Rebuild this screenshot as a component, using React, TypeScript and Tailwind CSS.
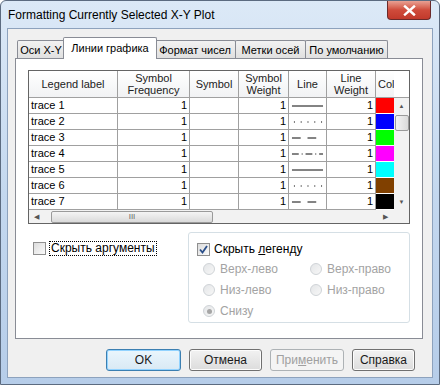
import React from "react";

const UI = { fontFamily: '"Liberation Sans", Arial, sans-serif' };

const ROWS = [
  { label: "trace 1", line: "solid", color: "#ff0000" },
  { label: "trace 2", line: "dot", color: "#0000ff" },
  { label: "trace 3", line: "dash", color: "#00ff00" },
  { label: "trace 4", line: "dashdot", color: "#ff00ff" },
  { label: "trace 5", line: "solid", color: "#00ffff" },
  { label: "trace 6", line: "dot", color: "#804000" },
  { label: "trace 7", line: "dash", color: "#000000" },
];

function LineStyle({ kind }: { kind: string }) {
  const dash: Record<string, string | undefined> = {
    solid: undefined,
    dot: "1 6",
    dash: "9 7",
    dashdot: "7 3 1 3",
  };
  return (
    <svg width="34" height="4" viewBox="0 0 34 4">
      <line
        x1={kind === "dot" ? "3" : "1"}
        y1="2"
        x2="33"
        y2="2"
        stroke={kind === "dot" ? "#444" : "#000"}
        strokeWidth={kind === "dot" ? "1.3" : "1"}
        strokeDasharray={dash[kind]}
      />
    </svg>
  );
}

function Checkbox({ checked }: { checked?: boolean }) {
  return (
    <span className="flex h-[13px] w-[13px] shrink-0 items-center justify-center border border-[#8f8f8f] bg-gradient-to-br from-[#dcdcdc] to-[#fbfbfb]">
      {checked && (
        <svg width="11" height="11" viewBox="0 0 11 11">
          <path d="M2 5.5 L4.5 8.5 L9 2" fill="none" stroke="#2b4f8a" strokeWidth="1.8" />
        </svg>
      )}
    </span>
  );
}

function Radio({ label, checked }: { label: string; checked?: boolean }) {
  return (
    <div className="flex h-[14px] items-center gap-[5px]">
      <span className="flex h-[12px] w-[12px] items-center justify-center rounded-full border border-[#cfd3d7] bg-gradient-to-br from-[#e4e6e8] to-[#f7f7f7]">
        {checked && <span className="h-[5px] w-[5px] rounded-full bg-[#a6a6a6]" />}
      </span>
      <span className="text-[12px] leading-[14px] text-[#a3a3a3]">{label}</span>
    </div>
  );
}

function Tab({ label, w, active }: { label: string; w: string; active?: boolean }) {
  if (active)
    return (
      <div className={`relative z-10 -mx-[2px] -mb-px flex h-[22px] items-start justify-center whitespace-nowrap rounded-t-[2px] border border-b-0 border-[#898c95] bg-white pt-[3px] text-[11px] leading-[14px] text-black ${w}`}>
        {label}
      </div>
    );
  return (
    <div className={`-ml-px flex h-[18px] items-center justify-center whitespace-nowrap rounded-t-[2px] border border-b-0 border-[#898c95] bg-gradient-to-b from-[#f2f2f2] to-[#e0e0e0] text-[11px] leading-[14px] text-black first:ml-0 ${w}`}>
      {label}
    </div>
  );
}

function Button({ label, w, focus, disabled }: { label: React.ReactNode; w: string; focus?: boolean; disabled?: boolean }) {
  return (
    <div
      className={`flex h-[22px] items-center justify-center rounded-[3px] border text-[12px] ${w} ${
        focus
          ? "border-[#3c7fb1] bg-gradient-to-b from-[#eaf6fd] to-[#d9e9f4] text-[#1a1a1a] shadow-[inset_0_0_0_1px_#92d3ff]"
          : disabled
          ? "border-[#adb2b5] bg-[#f4f4f4] text-[#a0a0a0]"
          : "border-[#707070] bg-gradient-to-b from-[#f2f2f2] to-[#dcdcdc] text-[#1a1a1a] shadow-[inset_0_0_0_1px_#fcfcfc]"
      }`}
    >
      {label}
    </div>
  );
}

function Grid() {
  const cell = "border-r border-b border-[#a0a0a0] h-[16px] text-[11px] leading-[15px] px-[2px] overflow-hidden";
  const head = "border-r border-b border-[#a0a0a0] flex items-center justify-center text-center text-[11px] leading-[12px] text-[#222] bg-gradient-to-b from-[#ffffff] to-[#f1f2f4]";
  return (
    <div className="flex w-[382px] flex-col border border-[#646464] bg-white">
      <div className="flex h-[27px]">
        <div className={`${head} w-[89px]`}>Legend label</div>
        <div className={`${head} w-[72px]`}>Symbol<br />Frequency</div>
        <div className={`${head} w-[49px]`}>Symbol</div>
        <div className={`${head} w-[50px]`}>Symbol<br />Weight</div>
        <div className={`${head} w-[38px]`}>Line</div>
        <div className={`${head} w-[49px]`}>Line<br />Weight</div>
        <div className={`${head} w-[18px] justify-start overflow-hidden border-r-0 pl-[2px]`}>Col</div>
        <div className="w-[15px] border-b border-[#a0a0a0] bg-white" />
      </div>
      <div className="flex">
        <div className="flex flex-col">
          {ROWS.map((r) => (
            <div key={r.label} className="flex">
              <div className={`${cell} w-[89px]`}>{r.label}</div>
              <div className={`${cell} w-[72px] text-right`}>1</div>
              <div className={`${cell} w-[49px]`} />
              <div className={`${cell} w-[50px] text-right`}>1</div>
              <div className={`${cell} flex w-[38px] items-center justify-center px-0`}>
                <LineStyle kind={r.line} />
              </div>
              <div className={`${cell} w-[49px] text-right`}>1</div>
              <div className="h-[16px] w-[18px] border-b border-white" style={{ backgroundColor: r.color }} />
            </div>
          ))}
        </div>
        <div className="flex w-[15px] flex-col items-center bg-[#f2f2f2]">
          <span className="mt-[4px] text-[6px] leading-[8px] text-[#555]">▲</span>
          <div className="mt-[5px] h-[16px] w-[14px] rounded-[2px] border border-[#9a9a9a] bg-gradient-to-r from-[#f4f4f4] to-[#dadada]" />
          <span className="mt-auto mb-[4px] text-[6px] leading-[8px] text-[#555]">▼</span>
        </div>
      </div>
      <div className="flex h-[13px] items-center">
        <div className="flex h-full w-[365px] items-center bg-[#f2f2f2]">
          <span className="ml-[5px] text-[7px] leading-[8px] text-[#555]">◀</span>
          <div className="ml-[12px] flex h-[12px] w-[162px] items-center justify-center rounded-[2px] border border-[#9a9a9a] bg-gradient-to-b from-[#f4f4f4] to-[#dadada] text-[8px] leading-[8px] text-[#666]">
            III
          </div>
          <span className="ml-auto mr-[6px] text-[7px] leading-[8px] text-[#555]">▶</span>
        </div>
        <div className="h-full w-[15px] bg-[#f2f2f2]" />
      </div>
    </div>
  );
}

export default function App() {
  return (
    <div className="relative h-[385px] w-[440px] overflow-hidden rounded-t-[6px] border border-[#5c6b80] bg-gradient-to-b from-[#dce9f7] via-[#c4d8ef] to-[#b6cde9] px-[6px] pb-[7px]" style={UI}>
      <div className="flex h-[27px] items-center pl-[1px] text-[12px] text-black">
        Formatting Currently Selected X-Y Plot
      </div>
      <div className="absolute right-[8px] top-0 flex h-[19px] w-[44px] items-center justify-center rounded-b-[4px] border border-t-0 border-[#6b2a2a] bg-gradient-to-b from-[#e8a093] via-[#cf4b3b] to-[#c2392b]">
        <svg width="13" height="11" viewBox="0 0 13 11">
          <path d="M2 1.5 L11 9.5 M11 1.5 L2 9.5" stroke="#fff" strokeWidth="2.4" strokeLinecap="square" />
        </svg>
      </div>

      <div className="flex h-[350px] flex-col border border-[#8da2bd] bg-[#f0f0f0] pl-[7px] pr-[9px] pt-[8px]">
        <div className="flex h-[21px] items-end pl-[2px]">
          <Tab label="Оси X-Y" w="w-[48px]" />
          <Tab label="Линии графика" w="w-[94px]" active />
          <Tab label="Формат чисел" w="w-[82px]" />
          <Tab label="Метки осей" w="w-[71px]" />
          <Tab label="По умолчанию" w="w-[83px]" />
        </div>
        <div className="flex h-[281px] flex-col border border-[#898c95] bg-white pl-[12px] pt-[11px]">
          <Grid />
          <div className="mt-[8px] flex w-[382px]">
            <div className="ml-[5px] mt-[9px] flex h-[15px] items-center gap-[3px] text-[12px] leading-[14px]">
              <Checkbox />
              <span className="border border-dotted border-black px-[1px] leading-[13px]">Скрыть аргументы</span>
            </div>
            <div className="ml-auto flex h-[91px] w-[222px] flex-col rounded-[3px] border border-[#d5dfe5] pl-[8px] pt-[9px]">
              <div className="flex h-[14px] items-center gap-[4px] text-[12px] leading-[14px]">
                <Checkbox checked />
                <span>
                  Скрыть <span className="underline">л</span>егенду
                </span>
              </div>
              <div className="mt-[6px] grid grid-cols-[107px_1fr] gap-y-[7px] pl-[6px]">
                <Radio label="Верх-лево" />
                <Radio label="Верх-право" />
                <Radio label="Низ-лево" />
                <Radio label="Низ-право" />
                <Radio label="Снизу" checked />
              </div>
            </div>
          </div>
        </div>
        <div className="mt-[10px] flex justify-end gap-[8px] pr-[8px]">
          <Button label="OK" w="w-[75px]" focus />
          <Button label="Отмена" w="w-[73px]" />
          <Button label={<span>При<span className="underline">м</span>енить</span>} w="w-[74px]" disabled />
          <Button label="Справка" w="w-[63px]" />
        </div>
      </div>
    </div>
  );
}
